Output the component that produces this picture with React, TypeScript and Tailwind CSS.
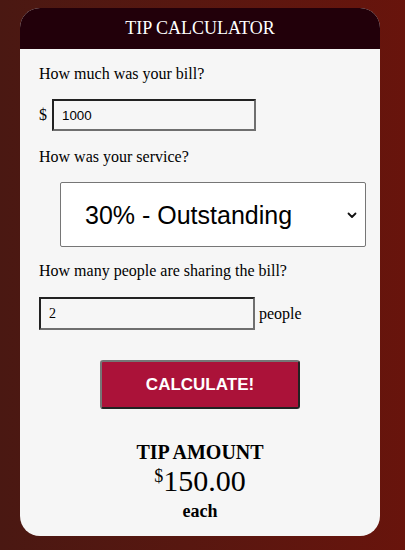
export default function App() {
  return (
    <div className="min-h-[550px] w-full bg-gradient-to-r from-[#4a1812] to-[#68140c] pt-[8px] pb-[17px] font-['Liberation_Serif',serif] text-black">
      <div className="ml-[20px] w-[360px] overflow-hidden rounded-[20px] bg-[#f6f6f6]">
        {/* Header */}
        <div className="flex h-[41px] items-center justify-center bg-[#22000a] text-[18px] text-white">
          TIP CALCULATOR
        </div>

        <div className="px-[19px] pt-[16px] pb-[15px] text-[16px] leading-[18px]">
          <p>How much was your bill?</p>
          <div className="mt-[16px] flex items-center gap-[5px]">
            <span>$</span>
            <input
              readOnly
              value="1000"
              className="h-[32px] w-[204px] border-2 border-t-[#222] border-l-[#222] border-r-[#6f6f6f] border-b-[#6f6f6f] bg-[#f6f6f6] px-[8px] font-['Liberation_Sans',sans-serif] text-[13.33px] outline-none"
            />
          </div>

          <p className="mt-[17px]">How was your service?</p>
          <div className="mt-[16px] ml-[21px] flex h-[65px] w-[306px] items-center justify-between rounded-[2px] border border-[#767676] bg-white pl-[24px] pr-[8px] font-['Liberation_Sans',sans-serif] text-[25px]">
            <span>30% - Outstanding</span>
            <svg width="10" height="10" viewBox="0 0 10 10" fill="none">
              <path d="M1.5 3.5 L5 7 L8.5 3.5" stroke="#111" strokeWidth="1.8" strokeLinecap="round" strokeLinejoin="round" />
            </svg>
          </div>

          <p className="mt-[15px]">How many people are sharing the bill?</p>
          <div className="mt-[17px] flex items-center gap-[4px]">
            <input
              readOnly
              value="2"
              className="h-[33px] w-[216px] border-2 border-t-[#222] border-l-[#222] border-r-[#6f6f6f] border-b-[#6f6f6f] bg-[#f6f6f6] px-[8px] font-['Liberation_Serif',serif] text-[14px] outline-none"
            />
            <span className="text-[16px]">people</span>
          </div>

          <div className="mt-[30px] flex justify-center">
            <button className="h-[49px] w-[200px] rounded-[3px] border-2 border-t-[#767676] border-l-[#767676] border-r-[#222] border-b-[#222] bg-[#ab1239] font-['Liberation_Sans',sans-serif] text-[17px] font-bold text-white">
              CALCULATE!
            </button>
          </div>

          <div className="mt-[32px] text-center">
            <div className="text-[20px] font-bold leading-[22px]">TIP AMOUNT</div>
            <div className="text-[30px] leading-[36px]">
              <sup className="text-[18px]">$</sup>150.00
            </div>
            <div className="mt-[2px] text-[18px] font-bold leading-[20px]">each</div>
          </div>
        </div>
      </div>
    </div>
  );
}
